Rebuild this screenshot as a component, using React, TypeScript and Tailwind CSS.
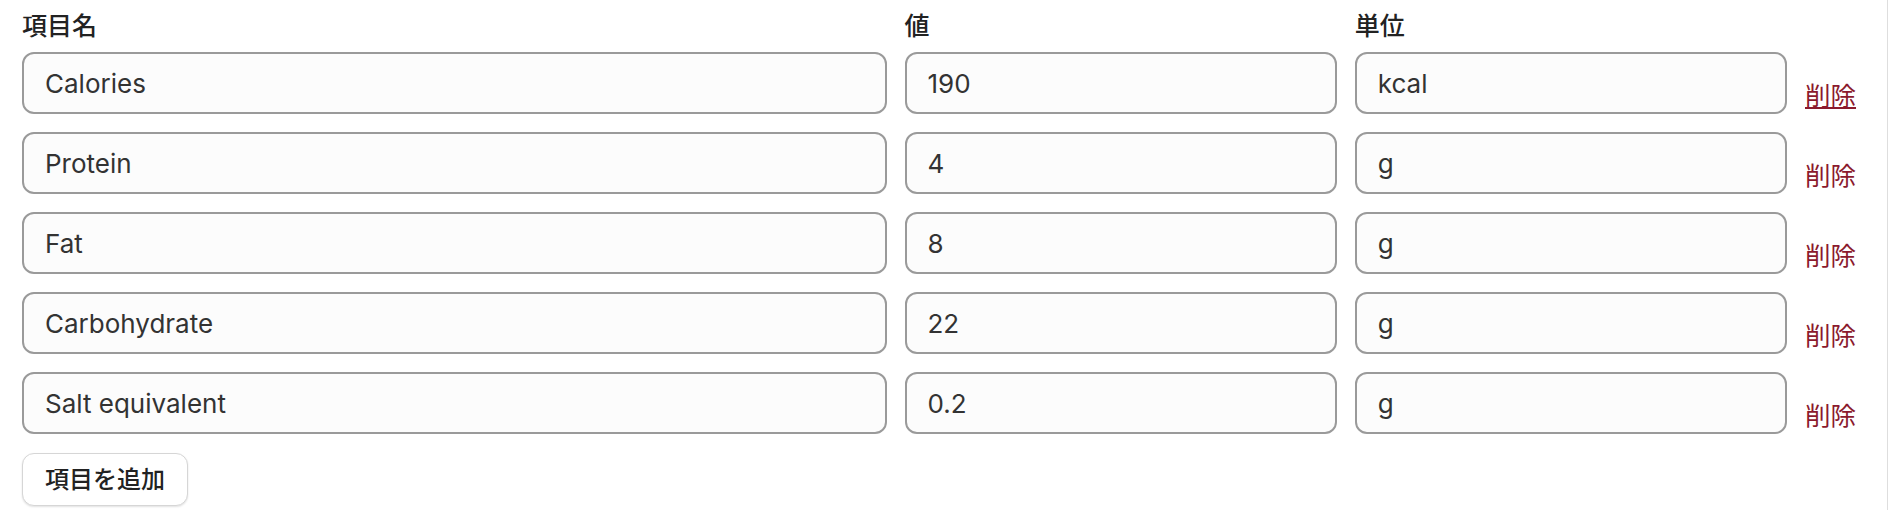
import React from "react";

const rows = [
  { name: "Calories", value: "190", unit: "kcal" },
  { name: "Protein", value: "4", unit: "g" },
  { name: "Fat", value: "8", unit: "g" },
  { name: "Carbohydrate", value: "22", unit: "g" },
  { name: "Salt equivalent", value: "0.2", unit: "g" },
];

const font = {
  fontFamily: 'Inter, "Noto Sans CJK JP", "Noto Sans", sans-serif',
};

function Field({ value }: { value: string }) {
  return (
    <input
      readOnly
      value={value}
      className="h-[62px] w-full rounded-[12px] border-2 border-[#9a9a9a] bg-[#fcfcfc] px-[21px] text-[26px] text-[#333333] outline-none"
      style={font}
    />
  );
}

export default function App() {
  return (
    <div
      className="h-[510px] w-[1888px] border-r border-[#dedede] bg-white pl-[22px] pt-[8px]"
      style={font}
    >
      <div className="grid w-[1835px] grid-cols-[2fr_1fr_1fr_52px] gap-x-[18px]">
        <div className="h-[36px] text-[25px] font-medium leading-[36px] text-[#222222]">項目名</div>
        <div className="h-[36px] text-[25px] font-medium leading-[36px] text-[#222222]">値</div>
        <div className="h-[36px] text-[25px] font-medium leading-[36px] text-[#222222]">単位</div>
        <div />
      </div>
      <div className="mt-[8px] grid w-[1835px] grid-cols-[2fr_1fr_1fr_52px] gap-x-[18px] gap-y-[18px]">
        {rows.map((r, i) => (
          <React.Fragment key={r.name}>
            <Field value={r.name} />
            <Field value={r.value} />
            <Field value={r.unit} />
            <div className="flex items-end">
              <a
                href="#"
                className={`whitespace-nowrap text-[25.5px] leading-[36px] text-[#8b1a2d] ${i === 0 ? "underline" : "no-underline"}`}
              >
                削除
              </a>
            </div>
          </React.Fragment>
        ))}
      </div>
      <button
        className="mt-[19px] h-[53px] rounded-[12px] border border-[#d6d6d6] bg-white px-[22px] text-[24px] font-medium text-[#222222] shadow-[0_1px_2px_rgba(0,0,0,0.12)]"
        style={font}
      >
        項目を追加
      </button>
    </div>
  );
}
